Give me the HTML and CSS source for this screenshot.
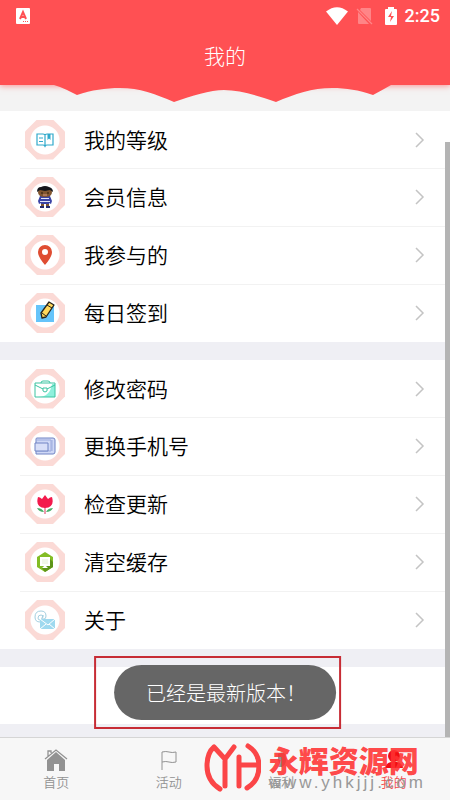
FILE: index.html
```html
<!DOCTYPE html>
<html lang="zh-CN">
<head>
  <meta charset="utf-8">
  <meta name="viewport" content="width=device-width, initial-scale=1">
  <title>我的</title>
  <link rel="stylesheet" href="styles.css">
</head>
<body>
  <header class="header">
    <div class="status-bar">
      <svg class="status-app" width="14" height="16" viewBox="0 0 14 16">
        <rect width="14" height="16" rx="1" fill="#fff"/>
        <path d="M4 11 7 4 10 11M5 9h4" fill="none" stroke="#ff5053" stroke-width="2"/>
        <path d="M7 13.5h6" stroke="#ff5053" stroke-dasharray="1 1"/>
      </svg>
      <div class="status-right">
        <svg width="22" height="18" viewBox="0 0 22 18"><path d="M0 4.5Q11-4 22 4.5L11 18Z" fill="#fff"/></svg>
        <svg class="status-sim" width="17" height="18" viewBox="0 0 17 18">
          <path d="M5 1h9q1 0 1 1v12L4 3ZM2 5l11 12H3q-1 0-1-1Z" fill="#ff8587"/>
          <path d="M1 2l15 15" stroke="#ff8587" stroke-width="1.3"/>
        </svg>
        <svg class="status-battery" width="12" height="18" viewBox="0 0 12 18">
          <path d="M1 2h2V0h6v2h2q1 0 1 1v14q0 1-1 1H1q-1 0-1-1V3q0-1 1-1Z" fill="#fff"/>
          <path d="M7 4 3 10h3l-1 5 4-6H6Z" fill="#ff5053"/>
        </svg>
        <time class="clock">2:25</time>
      </div>
    </div>
    <h1 class="title">我的</h1>
  </header>

  <main class="content">
    <svg class="wave" viewBox="0 0 450 18" preserveAspectRatio="none">
      <path d="M54 0Q61 2 67 5L77 10C92 5 105 3 120 3 140 3 155 9 174 17 192 11 210 5 224 5 240 5 258 11 276 17 295 9 312 3 332 3 347 3 358 5 373 10L384 4 391 0Z" fill="#ff5053"/>
    </svg>

    <nav class="list">
      <a class="row" href="#level">
        <span class="badge"><svg width="20" height="20" viewBox="0 0 20 20" fill="none" stroke="#2fa9cb" stroke-width="1.2">
          <path d="M2 4h6q2 0 2 1v11q-1-1-2-1H2ZM18 4h-6q-2 0-2 1v11q1-1 2-1h6ZM4 8h4M4 11.5h4"/>
          <path d="M12.500 4h3v6L14 8.500 12.500 10Z" fill="#2fa9cb" stroke="none"/>
        </svg></span>
        <span class="label">我的等级</span>
        <svg class="arrow" viewBox="0 0 10 16"><path d="m1 1 7 7-7 7"/></svg>
      </a>
      <a class="row" href="#member">
        <span class="badge"><svg width="18" height="22" viewBox="0 0 18 22">
          <path d="M4 10h10l2 5-1 3-2-1v1H5v-1l-2 1-1-3Z" fill="#3a43a5"/>
          <path d="M5 12.500h8M4 15.500h10" stroke="#e4e6fa"/>
          <path d="M2 6q0-4 7-4t7 4q0 5-7 5T2 6Z" fill="#80552f"/>
          <path d="M1 6Q1 1 5 1q4-2 8 0 4 1 4 5l-3-2-5 1-5-1Z" fill="#15161c"/>
          <path d="M5 7h2m4 0h2" stroke="#2b190e"/>
          <path d="M7 9h4" stroke="#d79a86"/>
          <path d="M5 18h3v2H5Zm5 0h3v2h-3Z" fill="#80552f"/>
          <path d="M4 21h4m2 0h4" stroke="#252b70" stroke-width="2"/>
        </svg></span>
        <span class="label">会员信息</span>
        <svg class="arrow" viewBox="0 0 10 16"><path d="m1 1 7 7-7 7"/></svg>
      </a>
      <a class="row" href="#joined">
        <span class="badge"><svg width="16" height="22" viewBox="0 0 16 22">
          <path d="M8 1a7 7 0 0 0-7 7q0 5 7 13 7-8 7-13a7 7 0 0 0-7-7Zm0 4a3 3 0 1 1 0 6 3 3 0 0 1 0-6Z" fill="#df4d32" fill-rule="evenodd"/>
        </svg></span>
        <span class="label">我参与的</span>
        <svg class="arrow" viewBox="0 0 10 16"><path d="m1 1 7 7-7 7"/></svg>
      </a>
      <a class="row" href="#checkin">
        <span class="badge"><svg width="20" height="24" viewBox="0 0 20 24">
          <path d="M1 4h18v17H1Z" fill="#65c4fa"/>
          <path d="m14 1 5 3-8 12-4 1-1-5Z" fill="#ffd75a" stroke="#29241d" stroke-width="1.3" stroke-linejoin="round"/>
          <path d="m12 4 5 3M7 12l4 3" stroke="#29241d"/>
        </svg></span>
        <span class="label">每日签到</span>
        <svg class="arrow" viewBox="0 0 10 16"><path d="m1 1 7 7-7 7"/></svg>
      </a>
    </nav>

    <nav class="list">
      <a class="row" href="#password">
        <span class="badge"><svg width="22" height="20" viewBox="0 0 22 20" fill="none" stroke="#3cc4a2">
          <path d="M18 5h3v13H4q12 0 14-13Z" fill="#8ff0dc" stroke="none"/>
          <path d="M1 4h20v14H1ZM7 4q0-2 2-2h5q2 0 2 2M1 6l8 4m4 0 8-4M9 9h4v3l-2 1-2-1Z"/>
        </svg></span>
        <span class="label">修改密码</span>
        <svg class="arrow" viewBox="0 0 10 16"><path d="m1 1 7 7-7 7"/></svg>
      </a>
      <a class="row" href="#phone">
        <span class="badge"><svg width="22" height="20" viewBox="0 0 22 20" stroke="#7184c4">
          <path d="M2 5V3q0-1 1-1h16q2 0 2 2v12q0 2-2 2H2Z" fill="#cfd8f6"/>
          <path d="M2 4h15v11H2M18 4v11" fill="none" stroke="#9cabdd"/>
          <path d="M1 7h13v8H1Z" fill="#d8dff8"/>
        </svg></span>
        <span class="label">更换手机号</span>
        <svg class="arrow" viewBox="0 0 10 16"><path d="m1 1 7 7-7 7"/></svg>
      </a>
      <a class="row" href="#update">
        <span class="badge"><svg width="18" height="20" viewBox="0 0 18 20">
          <path d="M9 12v8" stroke="#d9375c"/>
          <path d="M2 3q2 0 4 2l3-4 3 4q2-2 4-2 3 10-7 11Q-1 13 2 3Z" fill="#f31a4c"/>
          <path d="M1 14q5 0 7 4-5 0-7-4Zm16 0q-5 0-7 4 5 0 7-4Z" fill="#48ae69"/>
        </svg></span>
        <span class="label">检查更新</span>
        <svg class="arrow" viewBox="0 0 10 16"><path d="m1 1 7 7-7 7"/></svg>
      </a>
      <a class="row" href="#cache">
        <span class="badge"><svg width="18" height="20" viewBox="0 0 18 20">
          <path d="m9 0 8 5v10l-8 5-8-5V5Z" fill="#83bd25"/>
          <path d="m13 6 4 4v5l-8 5-3-4Z" fill="#5d9419"/>
          <path d="M4 5h10v9h-4l2 2H6l2-2H4Z" fill="#fff"/>
          <path d="M6 7h6v5H6Z" fill="#f1f7e9"/>
        </svg></span>
        <span class="label">清空缓存</span>
        <svg class="arrow" viewBox="0 0 10 16"><path d="m1 1 7 7-7 7"/></svg>
      </a>
      <a class="row" href="#about">
        <span class="badge"><svg width="22" height="20" viewBox="0 0 22 20" fill="none">
          <path d="M9 7q0-2-2-2-3 0-3 3 0 2 2 2t3-5q-1 5 1 4 2 0 2-3 0-5-5-5-6 0-6 6 0 5 5 5" stroke="#a4cfe0"/>
          <path d="M6 9h15v10H6Z" fill="#9fd9ef"/>
          <path d="m6 9 8 6 7-6M6 19l6-5m9 5-6-5" stroke="#fff"/>
        </svg></span>
        <span class="label">关于</span>
        <svg class="arrow" viewBox="0 0 10 16"><path d="m1 1 7 7-7 7"/></svg>
      </a>
    </nav>

    <div class="list list-empty"></div>
    <div class="scroll-thumb"></div>
  </main>

  <div class="toast-frame">
    <div class="toast" role="status">已经是最新版本！</div>
  </div>

  <footer class="tab-bar">
    <a class="tab" href="#home">
      <svg width="24" height="24" viewBox="0 0 24 24">
        <path d="m3 12 9-8 9 8v11h-6v-7h-5v7H3Z" fill="#929292"/>
        <path d="M1 11 12 2l11 9M4 8V3h3v2" fill="none" stroke="#929292" stroke-width="1.3"/>
      </svg>
      首页
    </a>
    <a class="tab" href="#activity">
      <svg width="24" height="24" viewBox="0 0 24 24" fill="none" stroke="#929292">
        <path d="M5 22V4q4-1 7 0t7 0v10q-4 1-7 0t-7 0"/>
      </svg>
      活动
    </a>
    <a class="tab" href="#welfare">
      <svg width="24" height="24" viewBox="0 0 24 24" fill="#929292">
        <path d="M9 6q4-3 7 0l1 6q0 5-4 7H9q2-4 0-7Z"/>
      </svg>
      福利
    </a>
    <a class="tab tab-active" href="#me">
      <svg width="24" height="24" viewBox="0 0 24 24" fill="#f00d14">
        <circle cx="12" cy="8" r="6"/><path d="M3 20q1-5 6-6h6q5 1 6 6Z"/>
      </svg>
      我的
    </a>
  </footer>

  <div class="watermark">
    <svg width="58" height="50" viewBox="0 0 58 50" fill="none" stroke="#fb4547" stroke-width="5" stroke-linecap="round" stroke-linejoin="round">
      <path d="M17 47Q4 39 4 24 4 11 11 5L22 17 31 5M22 17v27M36 15v29M36 23h19M45 4q11 7 11 20 0 15-12 22"/>
    </svg>
    <div class="watermark-text">
      <strong class="watermark-name">永辉资源网</strong>
      <span class="watermark-url">www.yhkjjj.com</span>
    </div>
  </div>
</body>
</html>
```
FILE: styles.css
```css
* {
  box-sizing: border-box;
}

body {
  display: flex;
  flex-direction: column;
  height: 100vh;
  margin: 0;
  overflow: hidden;
  position: relative;
  font-family: Roboto, "Noto Sans CJK SC", sans-serif;
  background: #efeff4;
}

a {
  color: inherit;
  text-decoration: none;
}

svg {
  display: block;
  flex-shrink: 0;
}

/* Header */
.header {
  flex-shrink: 0;
  background: #ff5053;
  color: #fff;
  box-shadow: 0 1px 6px rgba(255, 80, 83, 0.6);
}

.status-bar {
  display: flex;
  justify-content: space-between;
  align-items: center;
  height: 31px;
  padding: 0 10px 0 16px;
}

.status-right {
  display: flex;
  align-items: center;
  gap: 8px;
}

.status-battery {
  margin-left: 4px;
}

.clock {
  font-size: 18px;
  font-weight: 500;
  line-height: 20px;
}

.title {
  margin: 0;
  padding: 12px 0 14px;
  font-size: 21px;
  font-weight: 300;
  line-height: 28px;
  text-align: center;
}

/* Menu */
.content {
  flex: 1;
  min-height: 0;
  overflow: hidden;
  position: relative;
}

.wave {
  width: 100%;
  height: 18px;
  margin-bottom: 8px;
}

.content::before {
  content: "";
  position: absolute;
  z-index: -1;
  top: 0;
  left: 0;
  right: 0;
  height: 26px;
  background: #f3f3f3;
}

.list {
  margin-bottom: 18px;
  background: #fff;
}

.list-empty {
  height: 57px;
}

.row {
  display: flex;
  align-items: center;
  height: 57px;
  padding: 0 25px;
  color: #000;
}

.row + .row {
  height: 58px;
  background: linear-gradient(#f2f2f2, #f2f2f2) 20px 0 / 100% 1px no-repeat;
}

.badge {
  display: flex;
  align-items: center;
  justify-content: center;
  width: 40px;
  height: 40px;
  margin-right: 19px;
  background: radial-gradient(circle, #fff 14px, #fbdad6 15px);
  clip-path: polygon(30% 0, 70% 0, 100% 30%, 100% 70%, 70% 100%, 30% 100%, 0 70%, 0 30%);
}

.label {
  flex: 1;
  padding-top: 2px;
  font-size: 21px;
  font-weight: 350;
  line-height: 30px;
}

.arrow {
  width: 10px;
  height: 16px;
  fill: none;
  stroke: #c4c4c4;
  stroke-width: 1.5;
}

.scroll-thumb {
  position: absolute;
  top: 57px;
  right: 0;
  bottom: 0;
  width: 5px;
  background: #b4b4b4;
}

/* Toast */
.toast-frame {
  position: absolute;
  left: 50%;
  bottom: 71px;
  transform: translateX(-53%);
  padding: 7px 3px 7px 18px;
  border: 2px solid #c72c35;
}

.toast {
  padding: 14px 30px 11px 32px;
  border-radius: 28px;
  background: #666;
  color: #fff;
  font-size: 20px;
  font-weight: 300;
  line-height: 30px;
  white-space: nowrap;
}

/* Bottom tabs */
.tab-bar {
  display: flex;
  flex-shrink: 0;
  height: 63px;
  border-top: 1px solid #d5d5d5;
  background: #f7f7f7;
}

.tab {
  display: flex;
  flex: 1;
  flex-direction: column;
  align-items: center;
  padding-top: 10px;
  color: #929292;
  font-size: 13px;
  font-weight: 350;
  line-height: 22px;
}

.tab-active {
  color: #f5494c;
}

/* Site mark over the tabs */
.watermark {
  position: absolute;
  right: 24px;
  bottom: 8px;
  display: flex;
  align-items: center;
  gap: 8px;
  pointer-events: none;
}

.watermark-text {
  display: flex;
  flex-direction: column;
}

.watermark-name {
  color: rgba(255, 50, 50, 0.9);
  font-family: "Noto Sans CJK SC", sans-serif;
  font-size: 30px;
  font-weight: 900;
  line-height: 32px;
}

.watermark-url {
  color: #999;
  font-family: "Liberation Sans", Arial, sans-serif;
  font-size: 17px;
  letter-spacing: 3px;
  line-height: 16px;
}
```
